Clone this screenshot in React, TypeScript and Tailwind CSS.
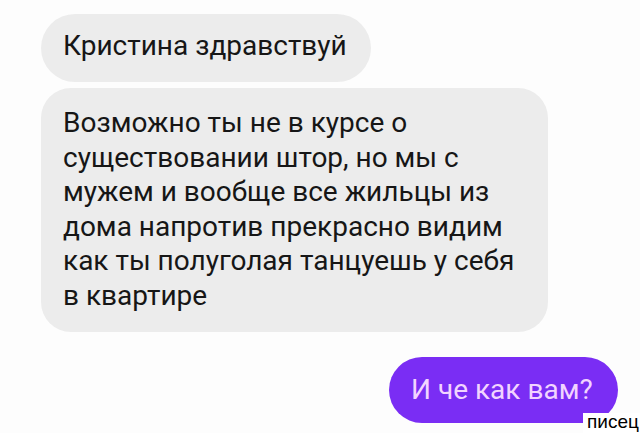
import React from 'react';

const font = { fontFamily: 'Roboto, "Liberation Sans", sans-serif' };

function Incoming({ lines, className = '' }: { lines: string[]; className?: string }) {
  return (
    <div className={`self-start bg-[#ececec] text-[#161616] text-[28px] leading-[34.6px] pl-[22px] pr-[22px] ${className}`}>
      {lines.map((l, i) => (
        <div key={i} className="whitespace-nowrap">{l}</div>
      ))}
    </div>
  );
}

export default function App() {
  return (
    <div style={font} className="relative w-[640px] h-[433px] overflow-hidden bg-[#fdfdfd]">
      <div className="flex flex-col pt-[14px] pl-[41px] pr-[22px]">
        <Incoming lines={['Кристина здравствуй']} className="w-[330px] h-[68px] pt-[15px] rounded-[34px]" />
        <Incoming
          className="mt-[6px] w-[507px] h-[244px] pt-[18px] rounded-[30px]"
          lines={[
            'Возможно ты не в курсе о',
            'существовании штор, но мы с',
            'мужем и вообще все жильцы из',
            'дома напротив прекрасно видим',
            'как ты полуголая танцуешь у себя',
            'в квартире',
          ]}
        />
        <div className="self-end mt-[25px] w-[229px] h-[66px] rounded-full bg-[#7a2df4] text-[#f2d4ff] text-[28px] leading-[34px] pt-[16px] pl-[22px] whitespace-nowrap">
          И че как вам?
        </div>
      </div>
      <div className="absolute right-0 bottom-0 w-[57px] h-[20px] bg-white text-black text-[19px] leading-[18px] pl-[4px] font-medium" style={{ fontFamily: '"Liberation Sans", sans-serif' }}>
        писец
      </div>
    </div>
  );
}
